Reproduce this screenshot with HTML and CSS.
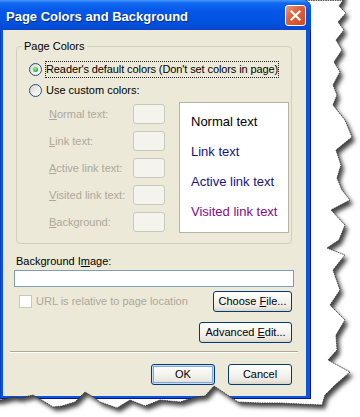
FILE: index.html
```html
<!DOCTYPE html>
<html lang="en">
<head>
    <meta charset="UTF-8">
    <meta name="viewport" content="width=device-width, initial-scale=1.0">
    <title>Page Colors and Background</title>
    <link rel="stylesheet" href="styles.css">
</head>
<body>
    <div class="screen">
        <div class="window">
            <div class="titlebar">
                <span class="title">Page Colors and Background</span>
                <button class="close" aria-label="Close">
                    <svg width="13" height="13" viewBox="0 0 13 13">
                        <path d="M2.5 2.5 L10.5 10.5 M10.5 2.5 L2.5 10.5" stroke="#fff" stroke-width="2.2" stroke-linecap="square"/>
                    </svg>
                </button>
            </div>

            <div class="client">
                <div class="group">
                    <span class="group-title">Page Colors</span>
                    <div class="option">
                        <span class="radio checked"></span>
                        <span class="option-text focus">Reader's default colors (Don't set colors in page)</span>
                    </div>
                    <div class="option">
                        <span class="radio"></span>
                        <span class="option-text">Use custom colors:</span>
                    </div>
                    <div class="custom">
                        <div class="swatches">
                            <span><u>N</u>ormal text:</span><span class="swatch"></span>
                            <span><u>L</u>ink text:</span><span class="swatch"></span>
                            <span><u>A</u>ctive link text:</span><span class="swatch"></span>
                            <span><u>V</u>isited link text:</span><span class="swatch"></span>
                            <span><u>B</u>ackground:</span><span class="swatch"></span>
                        </div>
                        <div class="preview">
                            <span class="pv-normal">Normal text</span>
                            <span class="pv-link">Link text</span>
                            <span class="pv-active">Active link text</span>
                            <span class="pv-visited">Visited link text</span>
                        </div>
                    </div>
                </div>

                <div class="field-label">Background I<u>m</u>age:</div>
                <div class="textbox"></div>

                <div class="file-row">
                    <div class="check">
                        <span class="checkbox"></span>
                        <span>URL is relative to page location</span>
                    </div>
                    <button class="btn choose">Choose <u>F</u>ile...</button>
                </div>
                <div class="adv-row">
                    <button class="btn adv">Advanced <u>E</u>dit...</button>
                </div>

                <div class="separator"></div>

                <div class="actions">
                    <button class="btn ok">OK</button>
                    <button class="btn cancel">Cancel</button>
                </div>
            </div>
        </div>

        <!-- torn paper edge over the screenshot -->
        <svg class="torn" width="360" height="417" viewBox="0 0 360 417">
            <defs>
                <filter id="soft" x="-10%" y="-10%" width="120%" height="120%">
                    <feGaussianBlur stdDeviation="2.2"/>
                </filter>
                <mask id="outside">
                    <rect width="360" height="417" fill="#fff"/>
                    <path fill="#000" d="M-10 -10 L343 -10 L343 0 L339 6 L346 13 L338 22 L344 30 L336 40 L342 50 L334 62 L340 72 L333 85 L337 95 L333 105 L345 120 L352 137 L336 150 L341 165 L337 178 L342 190 L350 200 L331 210 L345 225 L339 240 L327 248 L345 255 L333 270 L340 290 L330 305 L345 320 L336 335 L337 350 L328 360 L350 372 L335 385 L325 395 L322 405 L300 404 L280 403 L260 403 L238 402 L214 386 L205 396 L195 397 L180 402 L160 400 L145 406 L130 400 L117 408 L100 402 L95 398 L85 392 L75 402 L62 406 L53 407 L45 402 L33 395 L20 398 L12 397 L0 400 L-10 400 Z"/>
                </mask>
            </defs>
            <g mask="url(#outside)">
                <rect width="360" height="417" fill="#fff"/>
                <path transform="translate(3 4)" fill="#444" filter="url(#soft)" d="M-10 -10 L343 -10 L343 0 L339 6 L346 13 L338 22 L344 30 L336 40 L342 50 L334 62 L340 72 L333 85 L337 95 L333 105 L345 120 L352 137 L336 150 L341 165 L337 178 L342 190 L350 200 L331 210 L345 225 L339 240 L327 248 L345 255 L333 270 L340 290 L330 305 L345 320 L336 335 L337 350 L328 360 L350 372 L335 385 L325 395 L322 405 L300 404 L280 403 L260 403 L238 402 L214 386 L205 396 L195 397 L180 402 L160 400 L145 406 L130 400 L117 408 L100 402 L95 398 L85 392 L75 402 L62 406 L53 407 L45 402 L33 395 L20 398 L12 397 L0 400 L-10 400 Z"/>
            </g>
            <path fill="none" stroke="#2a2a2a" stroke-width="0.8" stroke-dasharray="1.6 0.8" d="M306 0.5 L343 0.5 L339 6 L346 13 L338 22 L344 30 L336 40 L342 50 L334 62 L340 72 L333 85 L337 95 L333 105 L345 120 L352 137 L336 150 L341 165 L337 178 L342 190 L350 200 L331 210 L345 225 L339 240 L327 248 L345 255 L333 270 L340 290 L330 305 L345 320 L336 335 L337 350 L328 360 L350 372 L335 385 L325 395 L322 405 L300 404 L280 403 L260 403 L238 402 L214 386 L205 396 L195 397 L180 402 L160 400 L145 406 L130 400 L117 408 L100 402 L95 398 L85 392 L75 402 L62 406 L53 407 L45 402 L33 395 L20 398 L12 397 L0 400"/>
        </svg>
    </div>
</body>
</html>
```

FILE: styles.css
```css
* {
    margin: 0;
    padding: 0;
    box-sizing: border-box;
}

body {
    width: 360px;
    height: 417px;
    overflow: hidden;
    background: #fff;
    color: #000;
    font: 11px/13px "Liberation Sans", Arial, sans-serif;
}

.screen {
    position: relative;
    width: 360px;
    height: 417px;
}

u {
    text-decoration-thickness: 1px;
    text-underline-offset: 1px;
}

/* window frame */
.window {
    width: 311px;
    display: flex;
    flex-direction: column;
    padding: 0 5px 3px 3px;
    background: #0a55df;
    border-top-right-radius: 8px;
    box-shadow: inset 1px 0 #0a3fbf, inset -1px 0 #00138c, inset 0 -1px #00138c;
}

.titlebar {
    height: 30px;
    margin: 0 -5px 0 -3px;
    padding: 0 5px 0 6px;
    display: flex;
    align-items: center;
    justify-content: space-between;
    border-top-right-radius: 8px;
    background: linear-gradient(#4a96fa 0, #1169f0 3px, #0659e8 10px, #0054e2 20px, #044cd6 27px, #0a45c6 30px);
}

.title {
    padding-top: 2px;
    color: #fff;
    font: bold 13px/15px "Liberation Sans", Arial, sans-serif;
    text-shadow: 1px 1px #0b2a8c;
}

.close {
    width: 21px;
    height: 21px;
    display: grid;
    place-items: center;
    border: 1px solid #fff;
    border-radius: 3px;
    background: linear-gradient(135deg, #ec9a7f 0, #e0623d 40%, #cc4a25 100%);
}

.client {
    display: flex;
    flex-direction: column;
    padding: 16px 12px 11px 11px;
    background: #ece9d8;
}

/* group box */
.group {
    position: relative;
    margin: 0 2px;
    padding: 14px 0 10px 12px;
    border: 1px solid #d0d0bf;
    border-radius: 4px;
}

.group-title {
    position: absolute;
    top: -7px;
    left: 5px;
    padding: 0 2px;
    background: #ece9d8;
}

.option {
    height: 17px;
    display: flex;
    align-items: center;
    gap: 3px;
}

.option + .option {
    margin-top: 4px;
}

.option-text {
    padding: 0 1px;
    line-height: 15px;
}

.option-text.focus {
    padding: 0;
    border: 1px dotted #222;
    letter-spacing: -0.1px;
}

.radio {
    width: 13px;
    height: 13px;
    display: grid;
    place-items: center;
    border: 1px solid #1c5180;
    border-radius: 50%;
    background: linear-gradient(135deg, #d6d5cd 0, #f2f1ea 60%, #fff 100%);
}

.radio.checked::after {
    content: "";
    width: 5px;
    height: 5px;
    border-radius: 50%;
    background: radial-gradient(circle at 40% 35%, #9cf39c 0, #3cbd3c 55%, #1b8c1b 100%);
}

.custom {
    display: flex;
    gap: 14px;
    margin-top: 3px;
    padding-left: 20px;
}

.swatches {
    display: grid;
    grid-template-columns: 84px 32px;
    row-gap: 7px;
    align-items: center;
    align-content: start;
    padding-top: 2px;
    color: #aca899;
}

.swatch {
    height: 20px;
    border: 1px solid #cac8bb;
    border-radius: 3px;
    background: #f4f3ee;
}

.preview {
    width: 110px;
    height: 131px;
    display: flex;
    flex-direction: column;
    padding: 4px 0 0 11px;
    border: 1px solid #b6b3a5;
    background: #fff;
    font-size: 13px;
    line-height: 30px;
}

.pv-normal { color: #000; }
.pv-link { color: #141482; }
.pv-active { color: #141482; }
.pv-visited { color: #860a86; }

/* background image */
.field-label {
    margin: 11px 0 0 2px;
}

.textbox {
    height: 17px;
    margin-top: 2px;
    border: 1px solid #7f9db9;
    background: #fff;
}

.file-row {
    display: flex;
    align-items: center;
    justify-content: space-between;
    margin: 4px 2px 0 0;
}

.check {
    display: flex;
    align-items: center;
    gap: 4px;
    margin-left: 5px;
    color: #aca899;
}

.checkbox {
    width: 13px;
    height: 13px;
    border: 1px solid #cac8bb;
    background: #fff;
}

.adv-row {
    display: flex;
    justify-content: flex-end;
    margin: 10px 2px 0 0;
}

.btn {
    height: 21px;
    padding: 0;
    border: 1px solid #003c74;
    border-radius: 3px;
    color: #000;
    font: inherit;
    background: linear-gradient(#fff 0, #f5f4ef 45%, #ebe9e1 80%, #d9d4c7 100%);
}

.choose { width: 79px; }
.adv { width: 93px; }
.ok, .cancel { width: 64px; }

.ok {
    box-shadow: inset 0 0 0 1px #c6dbf8, inset 0 0 0 2px #7fa8e8;
}

.separator {
    height: 2px;
    margin: 8px -4px 0;
    border-top: 1px solid #aca899;
    border-bottom: 1px solid #fff;
}

.actions {
    display: flex;
    justify-content: flex-end;
    gap: 13px;
    margin: 11px 2px 0 0;
}

.torn {
    position: absolute;
    top: 0;
    left: 0;
    pointer-events: none;
}
```
